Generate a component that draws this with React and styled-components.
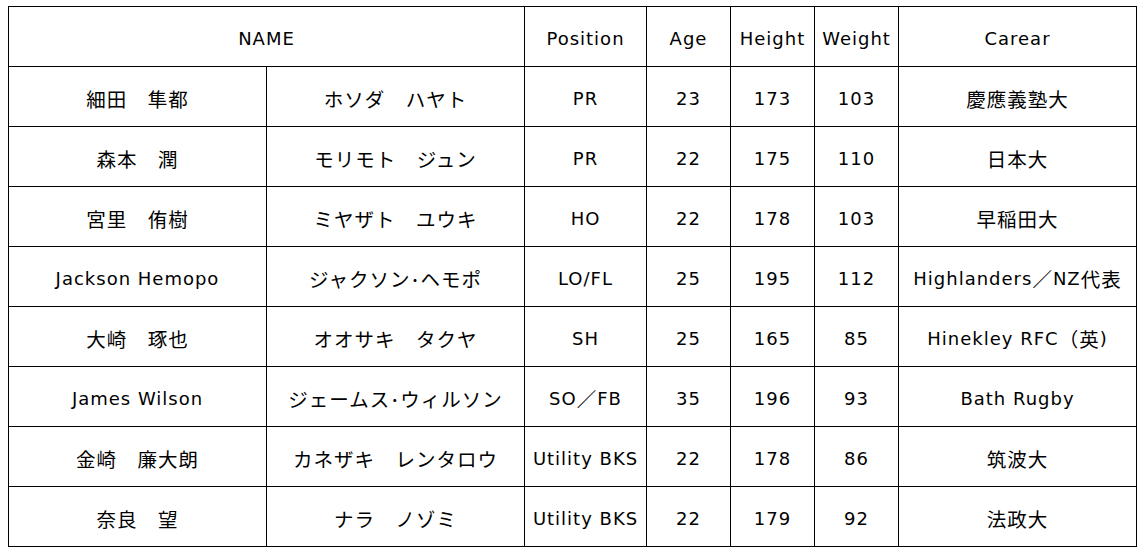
import React from "react";
import styled, { createGlobalStyle } from "styled-components";

const GlobalStyle = createGlobalStyle`
  body {
    margin: 6px 8px;
    background: #fff;
    font-family: "DejaVu Sans", "Noto Sans CJK JP", sans-serif;
  }
`;

const Grid = styled.div`
  display: grid;
  grid-template-columns: 257px 257px 121px 83px 83px 83px 237px;
  grid-auto-rows: 59px;
  gap: 1px;
  padding: 1px;
  background: #000;
  width: max-content;
`;

const Cell = styled.div`
  grid-column: ${(p) => (p.span ? `span ${p.span}` : "auto")};
  background: #fff;
  display: flex;
  align-items: center;
  justify-content: center;
  padding-top: 4px;
  box-sizing: border-box;
  font-size: 18px;
  letter-spacing: 1px;
  color: #000;
  white-space: nowrap;
`;

const Ja = styled.span`
  font-family: "Noto Sans CJK JP", sans-serif;
  font-size: 19.5px;
  letter-spacing: 1px;
`;

const players = [
  ["細田　隼都", "ホソダ　ハヤト", "PR", "23", "173", "103", "慶應義塾大"],
  ["森本　潤", "モリモト　ジュン", "PR", "22", "175", "110", "日本大"],
  ["宮里　侑樹", "ミヤザト　ユウキ", "HO", "22", "178", "103", "早稲田大"],
  ["Jackson Hemopo", "ジャクソン･ヘモポ", "LO/FL", "25", "195", "112", "Highlanders／NZ代表"],
  ["大崎　琢也", "オオサキ　タクヤ", "SH", "25", "165", "85", "Hinekley RFC（英)"],
  ["James Wilson", "ジェームス･ウィルソン", "SO／FB", "35", "196", "93", "Bath Rugby"],
  ["金崎　廉大朗", "カネザキ　レンタロウ", "Utility BKS", "22", "178", "86", "筑波大"],
  ["奈良　望", "ナラ　ノゾミ", "Utility BKS", "22", "179", "92", "法政大"],
];

const cjk = /([\u3000-\u30ff\u4e00-\u9fff\uff01-\uff60]+)/;

function Text({ value }) {
  return value
    .split(cjk)
    .filter(Boolean)
    .map((part, i) => (cjk.test(part) ? <Ja key={i}>{part}</Ja> : <span key={i}>{part}</span>));
}

export default function App() {
  return (
    <>
      <GlobalStyle />
      <Grid>
        <Cell span={2}>NAME</Cell>
        <Cell>Position</Cell>
        <Cell>Age</Cell>
        <Cell>Height</Cell>
        <Cell>Weight</Cell>
        <Cell>Carear</Cell>
        {players.map((row, i) =>
          row.map((v, j) => (
            <Cell key={`${i}-${j}`}>
              <Text value={v} />
            </Cell>
          ))
        )}
      </Grid>
    </>
  );
}
